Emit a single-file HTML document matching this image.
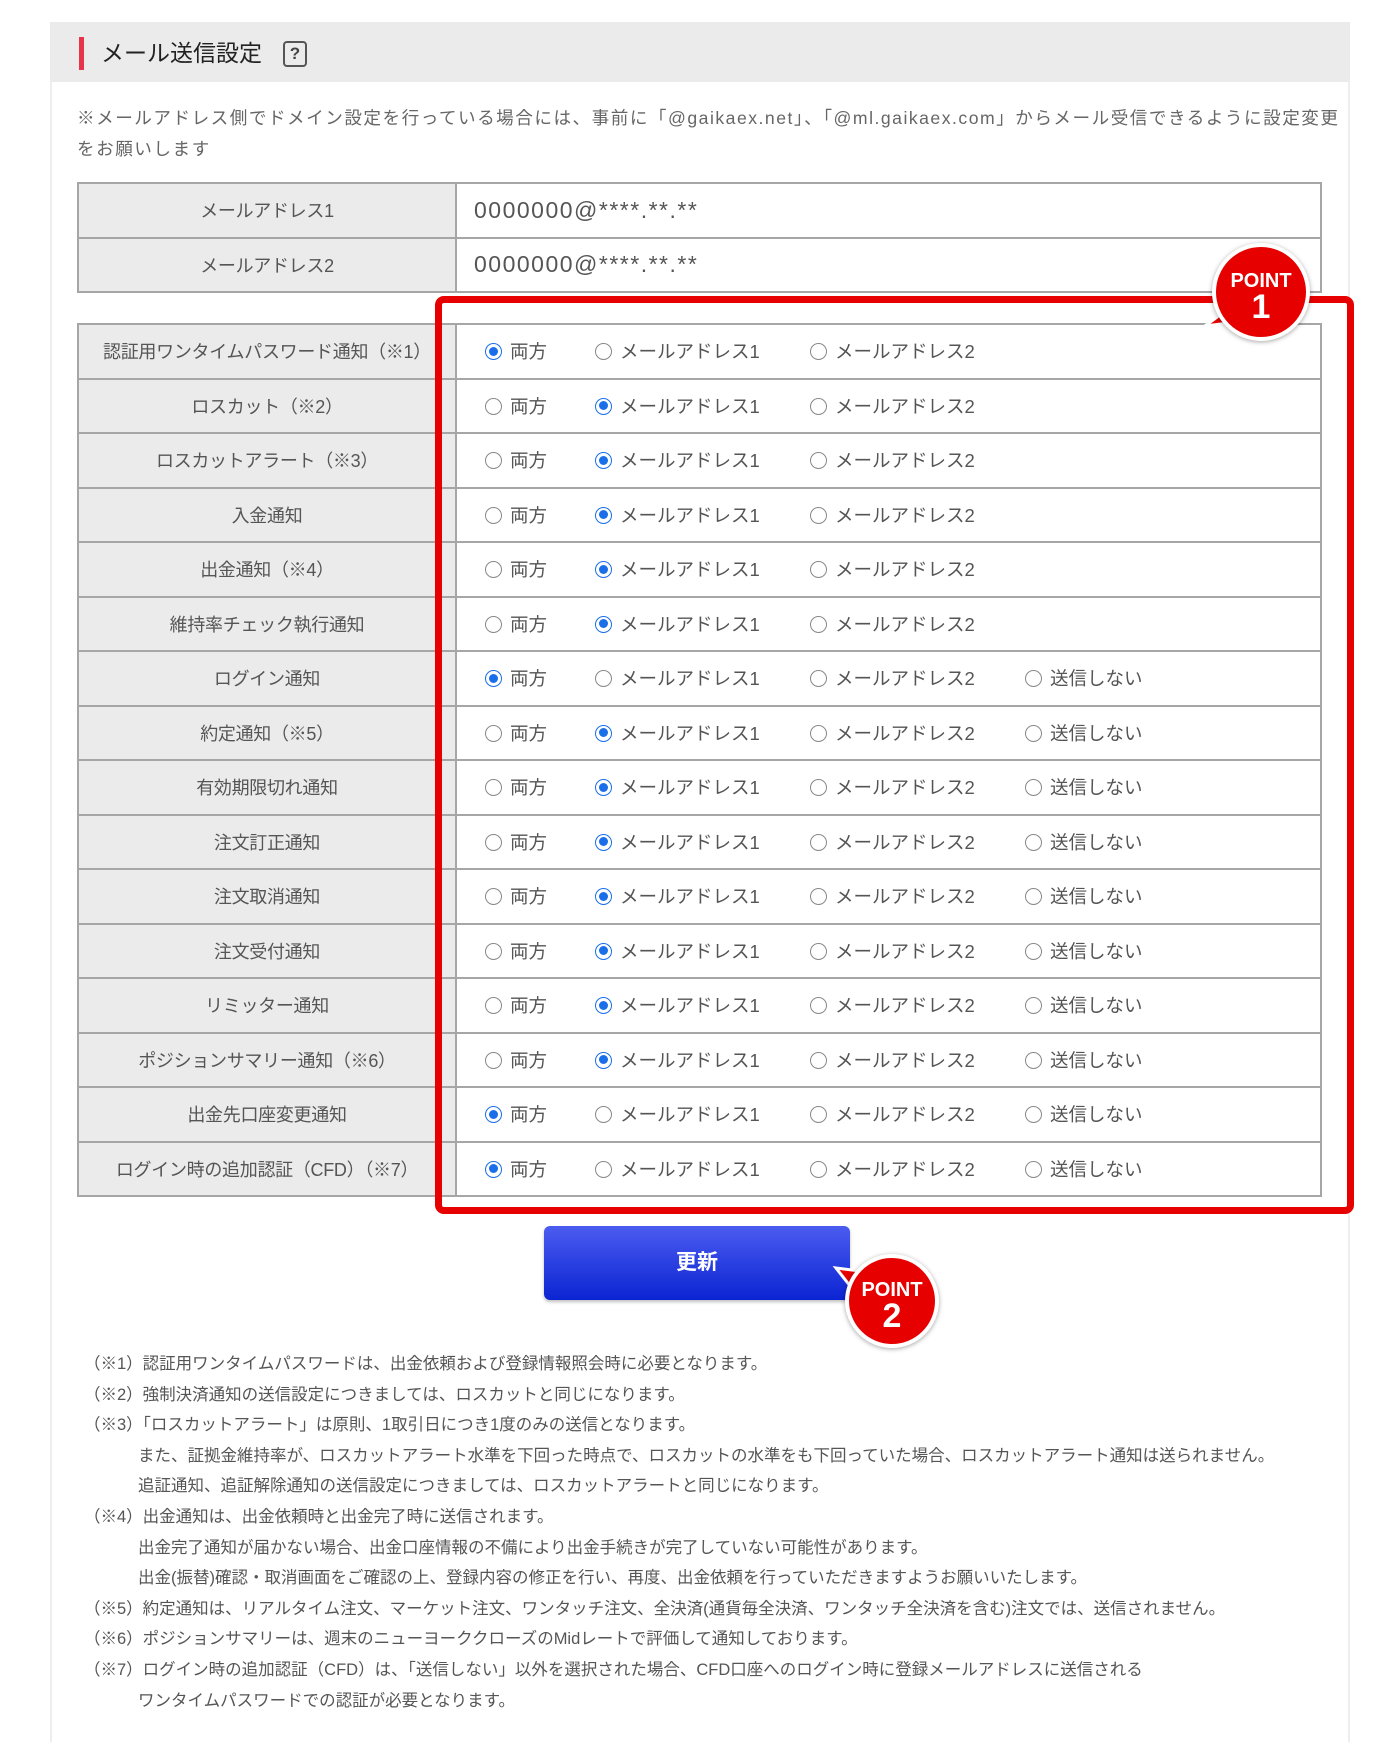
<!DOCTYPE html>
<html><head><meta charset="utf-8">
<style>
*{margin:0;padding:0;box-sizing:border-box}
body{width:1400px;height:1720px;background:#fff;position:relative;overflow:hidden;font-family:"Liberation Sans","Noto Sans CJK JP",sans-serif;color:#555}
.panel{position:absolute;left:50px;top:22px;width:1300px;height:1720px;border-left:2px solid #eee;border-right:2px solid #eee}
.hdr{position:absolute;left:50px;top:22px;width:1300px;height:60px;background:#ebebeb}
.bar{position:absolute;left:79px;top:37px;width:5px;height:33px;background:#e8344a}
.title{position:absolute;left:101px;top:38px;font-size:23px;color:#222;line-height:30px}
.q{position:absolute;left:283px;top:41px;width:24px;height:26px;border:2px solid #555;border-radius:4px;font-size:17px;color:#444;text-align:center;line-height:22px;font-weight:bold}
.note{position:absolute;left:77px;top:103px;width:1270px;font-size:17.6px;line-height:31px;color:#666;letter-spacing:1.5px;white-space:nowrap}
table{position:absolute;border-collapse:collapse;left:77px;width:1245px}
td{border:2px solid #a6a6a6;height:54.5px;font-size:18px}
td.l{width:378px;background:#ebebeb;text-align:center;color:#555;letter-spacing:-0.3px}
td.v{position:relative;background:#fff}
.val{font-size:23px;padding-left:17px;color:#555;letter-spacing:1.5px}
.r{position:absolute;top:50%;transform:translateY(-50%);white-space:nowrap;font-size:18.5px;color:#555}
.r i{display:inline-block;width:17px;height:17px;border:1.5px solid #888;border-radius:50%;vertical-align:-2px;margin-right:8px;background:#fff;position:relative}
.r i.on{border-color:#1a6fe8}
.r i.on:after{content:"";position:absolute;left:2.5px;top:2.5px;width:9px;height:9px;border-radius:50%;background:#1a6fe8}
.box{position:absolute;left:435px;top:296px;width:919px;height:918px;border:7px solid #e60000;border-radius:9px}
.pt{position:absolute;border-radius:50%;background:#e60000;border:4px solid #fff;box-shadow:0 1px 5px rgba(0,0,0,.35);color:#fff;text-align:center;font-weight:bold;font-family:"Liberation Sans",sans-serif}
.pt b{display:block;font-size:20px;line-height:20px}
.pt span{display:block;font-size:34px;line-height:32px}
.btn{position:absolute;left:544px;top:1226px;width:306px;height:74px;border-radius:6px;background:linear-gradient(#4b5cf0,#0b24d2);color:#fff;font-size:21px;font-weight:bold;text-align:center;line-height:74px;box-shadow:0 2px 3px rgba(0,0,0,.25)}
.fn{position:absolute;left:84px;top:1349px;font-size:16.5px;line-height:30.6px;color:#555;white-space:nowrap}
.fn div.i{padding-left:54px}
</style></head><body>
<div class="panel"></div>
<div class="hdr"></div>
<div class="bar"></div>
<div class="title">メール送信設定</div>
<div class="q">?</div>
<div class="note">※メールアドレス側でドメイン設定を行っている場合には、事前に「@gaikaex.net」、「@ml.gaikaex.com」からメール受信できるように設定変更<br>をお願いします</div>

<table style="top:182px">
<tr><td class="l">メールアドレス1</td><td class="v"><span class="val">0000000@****.**.**</span></td></tr>
<tr><td class="l">メールアドレス2</td><td class="v"><span class="val">0000000@****.**.**</span></td></tr>
</table>

<table style="top:323px" id="t2">
<tr><td class="l">認証用ワンタイムパスワード通知（※1）</td><td class="v"><span class="r" style="left:28px"><i class="on"></i>両方</span><span class="r" style="left:138px"><i></i>メールアドレス1</span><span class="r" style="left:353px"><i></i>メールアドレス2</span></td></tr>
<tr><td class="l">ロスカット（※2）</td><td class="v"><span class="r" style="left:28px"><i></i>両方</span><span class="r" style="left:138px"><i class="on"></i>メールアドレス1</span><span class="r" style="left:353px"><i></i>メールアドレス2</span></td></tr>
<tr><td class="l">ロスカットアラート（※3）</td><td class="v"><span class="r" style="left:28px"><i></i>両方</span><span class="r" style="left:138px"><i class="on"></i>メールアドレス1</span><span class="r" style="left:353px"><i></i>メールアドレス2</span></td></tr>
<tr><td class="l">入金通知</td><td class="v"><span class="r" style="left:28px"><i></i>両方</span><span class="r" style="left:138px"><i class="on"></i>メールアドレス1</span><span class="r" style="left:353px"><i></i>メールアドレス2</span></td></tr>
<tr><td class="l">出金通知（※4）</td><td class="v"><span class="r" style="left:28px"><i></i>両方</span><span class="r" style="left:138px"><i class="on"></i>メールアドレス1</span><span class="r" style="left:353px"><i></i>メールアドレス2</span></td></tr>
<tr><td class="l">維持率チェック執行通知</td><td class="v"><span class="r" style="left:28px"><i></i>両方</span><span class="r" style="left:138px"><i class="on"></i>メールアドレス1</span><span class="r" style="left:353px"><i></i>メールアドレス2</span></td></tr>
<tr><td class="l">ログイン通知</td><td class="v"><span class="r" style="left:28px"><i class="on"></i>両方</span><span class="r" style="left:138px"><i></i>メールアドレス1</span><span class="r" style="left:353px"><i></i>メールアドレス2</span><span class="r" style="left:568px"><i></i>送信しない</span></td></tr>
<tr><td class="l">約定通知（※5）</td><td class="v"><span class="r" style="left:28px"><i></i>両方</span><span class="r" style="left:138px"><i class="on"></i>メールアドレス1</span><span class="r" style="left:353px"><i></i>メールアドレス2</span><span class="r" style="left:568px"><i></i>送信しない</span></td></tr>
<tr><td class="l">有効期限切れ通知</td><td class="v"><span class="r" style="left:28px"><i></i>両方</span><span class="r" style="left:138px"><i class="on"></i>メールアドレス1</span><span class="r" style="left:353px"><i></i>メールアドレス2</span><span class="r" style="left:568px"><i></i>送信しない</span></td></tr>
<tr><td class="l">注文訂正通知</td><td class="v"><span class="r" style="left:28px"><i></i>両方</span><span class="r" style="left:138px"><i class="on"></i>メールアドレス1</span><span class="r" style="left:353px"><i></i>メールアドレス2</span><span class="r" style="left:568px"><i></i>送信しない</span></td></tr>
<tr><td class="l">注文取消通知</td><td class="v"><span class="r" style="left:28px"><i></i>両方</span><span class="r" style="left:138px"><i class="on"></i>メールアドレス1</span><span class="r" style="left:353px"><i></i>メールアドレス2</span><span class="r" style="left:568px"><i></i>送信しない</span></td></tr>
<tr><td class="l">注文受付通知</td><td class="v"><span class="r" style="left:28px"><i></i>両方</span><span class="r" style="left:138px"><i class="on"></i>メールアドレス1</span><span class="r" style="left:353px"><i></i>メールアドレス2</span><span class="r" style="left:568px"><i></i>送信しない</span></td></tr>
<tr><td class="l">リミッター通知</td><td class="v"><span class="r" style="left:28px"><i></i>両方</span><span class="r" style="left:138px"><i class="on"></i>メールアドレス1</span><span class="r" style="left:353px"><i></i>メールアドレス2</span><span class="r" style="left:568px"><i></i>送信しない</span></td></tr>
<tr><td class="l">ポジションサマリー通知（※6）</td><td class="v"><span class="r" style="left:28px"><i></i>両方</span><span class="r" style="left:138px"><i class="on"></i>メールアドレス1</span><span class="r" style="left:353px"><i></i>メールアドレス2</span><span class="r" style="left:568px"><i></i>送信しない</span></td></tr>
<tr><td class="l">出金先口座変更通知</td><td class="v"><span class="r" style="left:28px"><i class="on"></i>両方</span><span class="r" style="left:138px"><i></i>メールアドレス1</span><span class="r" style="left:353px"><i></i>メールアドレス2</span><span class="r" style="left:568px"><i></i>送信しない</span></td></tr>
<tr><td class="l">ログイン時の追加認証（CFD）（※7）</td><td class="v"><span class="r" style="left:28px"><i class="on"></i>両方</span><span class="r" style="left:138px"><i></i>メールアドレス1</span><span class="r" style="left:353px"><i></i>メールアドレス2</span><span class="r" style="left:568px"><i></i>送信しない</span></td></tr>
</table>

<div class="box"></div>
<svg style="position:absolute;left:1195px;top:300px" width="50" height="40"><polygon points="10,26 45,0 42,22" fill="#e60000" stroke="#fff" stroke-width="3"/></svg>
<div class="pt" style="left:1212px;top:243px;width:98px;height:98px;padding-top:24px"><b>POINT</b><span>1</span></div>

<div class="btn">更新</div>
<svg style="position:absolute;left:828px;top:1258px" width="50" height="40"><polygon points="8,10 40,14 30,38" fill="#e60000" stroke="#fff" stroke-width="3"/></svg>
<div class="pt" style="left:845px;top:1254px;width:94px;height:94px;padding-top:22px"><b>POINT</b><span>2</span></div>

<div class="fn">
<div>（※1）認証用ワンタイムパスワードは、出金依頼および登録情報照会時に必要となります。</div>
<div>（※2）強制決済通知の送信設定につきましては、ロスカットと同じになります。</div>
<div>（※3）「ロスカットアラート」は原則、1取引日につき1度のみの送信となります。</div>
<div class="i">また、証拠金維持率が、ロスカットアラート水準を下回った時点で、ロスカットの水準をも下回っていた場合、ロスカットアラート通知は送られません。</div>
<div class="i">追証通知、追証解除通知の送信設定につきましては、ロスカットアラートと同じになります。</div>
<div>（※4）出金通知は、出金依頼時と出金完了時に送信されます。</div>
<div class="i">出金完了通知が届かない場合、出金口座情報の不備により出金手続きが完了していない可能性があります。</div>
<div class="i">出金(振替)確認・取消画面をご確認の上、登録内容の修正を行い、再度、出金依頼を行っていただきますようお願いいたします。</div>
<div>（※5）約定通知は、リアルタイム注文、マーケット注文、ワンタッチ注文、全決済(通貨毎全決済、ワンタッチ全決済を含む)注文では、送信されません。</div>
<div>（※6）ポジションサマリーは、週末のニューヨーククローズのMidレートで評価して通知しております。</div>
<div>（※7）ログイン時の追加認証（CFD）は、「送信しない」以外を選択された場合、CFD口座へのログイン時に登録メールアドレスに送信される</div>
<div class="i">ワンタイムパスワードでの認証が必要となります。</div>
</div>
</body></html>
